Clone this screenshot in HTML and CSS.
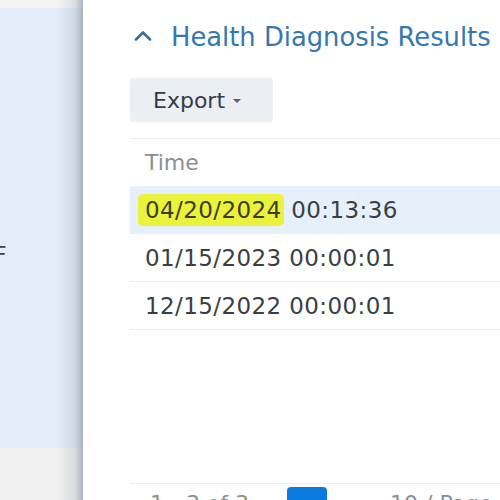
FILE: index.html
```html
<!DOCTYPE html>
<html>
<head>
<meta charset="utf-8">
<link rel="stylesheet" href="styles.css">
</head>
<body>
<div class="page">
  <aside class="sidebar">
    <div class="side-top"></div>
    <div class="side-mid"><span class="cut-letter">F</span></div>
    <div class="side-bottom"></div>
  </aside>
  <main class="main">
    <div class="title-row">
      <svg class="chevron" width="18" height="11" viewBox="0 0 18 11"><path d="M2 9.5 L9 2.5 L16 9.5" fill="none" stroke="#3c6f98" stroke-width="2.6" stroke-linecap="round" stroke-linejoin="round"/></svg>
      <span class="title">Health Diagnosis Results</span>
    </div>
    <div class="toolbar">
      <button class="export-btn">Export <span class="caret"></span></button>
    </div>
    <div class="table">
      <div class="row head"><span class="cell muted">Time</span></div>
      <div class="row selected"><span class="cell"><mark class="hl">04/20/2024</mark> 00:13:36</span></div>
      <div class="row"><span class="cell">01/15/2023 00:00:01</span></div>
      <div class="row"><span class="cell">12/15/2022 00:00:01</span></div>
    </div>
    <div class="footer">
      <span class="foot-text">1 - 3 of 3</span>
      <span class="page-btn"></span>
      <span class="foot-text right">10 / Page</span>
    </div>
  </main>
</div>
</body>
</html>
```

FILE: styles.css
```css
html, body {
  margin: 0;
  padding: 0;
  width: 500px;
  height: 500px;
  overflow: hidden;
  background: #ffffff;
  font-family: "DejaVu Sans", Verdana, sans-serif;
}

.page {
  display: flex;
  width: 500px;
  height: 500px;
  overflow: hidden;
}

.sidebar {
  width: 83px;
  flex: none;
  display: flex;
  flex-direction: column;
  position: relative;
}

.sidebar::after {
  content: "";
  position: absolute;
  top: 0;
  right: 0;
  bottom: 0;
  width: 26px;
  background: linear-gradient(90deg, rgba(70,80,100,0) 0%, rgba(70,80,100,0.14) 70%, rgba(70,80,100,0.32) 92%, rgba(70,80,100,0.4) 100%);
}

.side-top {
  height: 8px;
  background: #f4f4f4;
}

.side-mid {
  flex: 1;
  background: #e3edf9;
  padding-top: 234px;
  overflow: hidden;
}

.cut-letter {
  display: block;
  margin-left: -6px;
  font-size: 22px;
  line-height: 26px;
  color: #3a3f45;
}

.side-bottom {
  height: 52px;
  background: #f1f1f1;
}

.main {
  flex: 1;
  min-width: 0;
  display: flex;
  flex-direction: column;
  padding-left: 47px;
  overflow: hidden;
}

.title-row {
  display: flex;
  align-items: center;
  margin-top: 22px;
  height: 30px;
  padding-left: 4px;
  white-space: nowrap;
}

.chevron {
  flex: none;
  margin-right: 19px;
  margin-top: -3px;
}

.title {
  font-size: 25.8px;
  line-height: 30px;
  color: #3578b0;
}

.toolbar {
  margin-top: 26px;
  display: flex;
}

.export-btn {
  width: 143px;
  height: 44px;
  border: none;
  border-radius: 3px;
  background: #ebeef3;
  color: #343c47;
  font-family: "DejaVu Sans", Verdana, sans-serif;
  font-size: 22px;
  padding: 0 0 0 23px;
  text-align: left;
  display: flex;
  align-items: center;
}

.caret {
  display: inline-block;
  width: 0;
  height: 0;
  margin-left: 8px;
  margin-top: 2px;
  border-left: 4px solid transparent;
  border-right: 4px solid transparent;
  border-top: 4px solid #5a6270;
}

.table {
  margin-top: 16px;
  border-top: 1px solid #eceef0;
  width: 400px;
}

.row {
  height: 47px;
  display: flex;
  align-items: center;
  border-bottom: 1px solid #eceef0;
  white-space: nowrap;
}

.row.head {
  border-bottom: none;
}

.row.selected {
  background: #e6f0fa;
  border-bottom-color: #e6f0fa;
}

.cell {
  padding-left: 15px;
  font-size: 23px;
  letter-spacing: 0.4px;
  color: #3a3f45;
}

.cell.muted {
  color: #8a8f95;
  font-size: 22px;
  letter-spacing: 0;
}

.hl {
  background: #ebf23c;
  color: #3a3f2a;
  padding: 3px 2px 3px 7px;
  margin-left: -7px;
  border-radius: 5px;
}

.footer {
  margin-top: auto;
  height: 16px;
  border-top: 1px solid #eceef0;
  display: flex;
  align-items: flex-start;
  padding-left: 20px;
  width: 400px;
  overflow: hidden;
}

.foot-text {
  width: 137px;
  flex: none;
  font-size: 22px;
  line-height: 22px;
  margin-top: 9px;
  color: #8a8f95;
  white-space: nowrap;
}

.foot-text.right {
  margin-left: 63px;
}

.page-btn {
  flex: none;
  width: 40px;
  height: 30px;
  margin-top: 3px;
  border-radius: 4px;
  background: #0b7ae0;
}
```
